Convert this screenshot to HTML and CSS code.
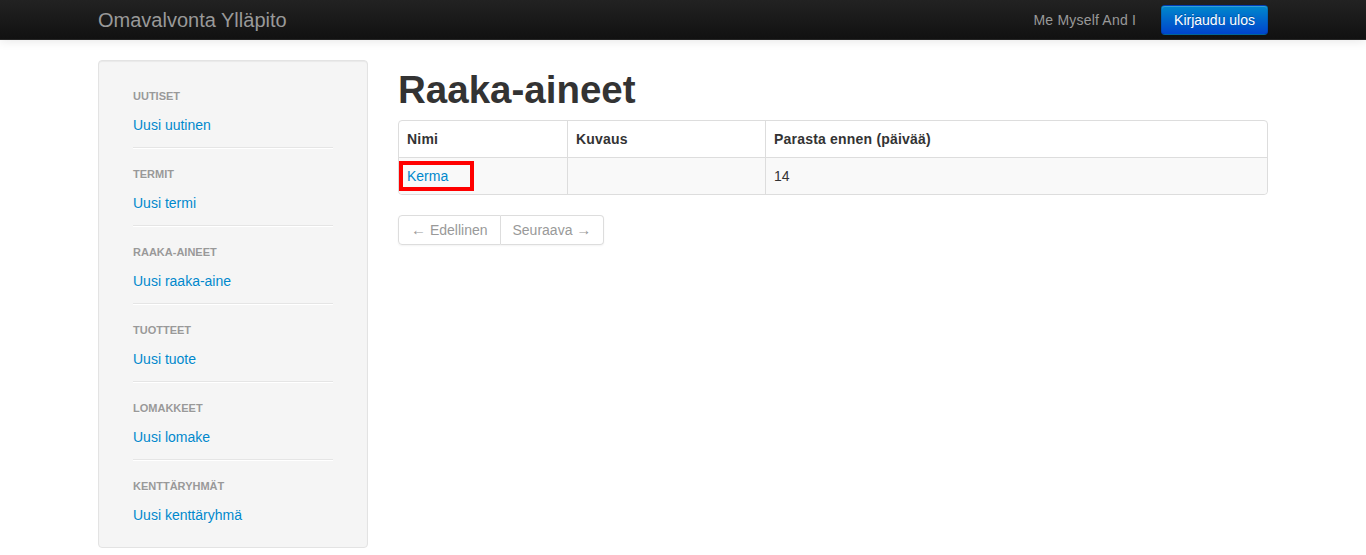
FILE: index.html
```html
<!DOCTYPE html>
<html lang="fi">
<head>
<meta charset="utf-8">
<title>Raaka-aineet</title>
<link rel="stylesheet" href="styles.css">
</head>
<body>
<header class="navbar">
  <div class="container navbar-inner">
    <a class="brand" href="#">Omavalvonta Ylläpito</a>
    <div class="navbar-right">
      <span class="navbar-text">Me Myself And I</span>
      <a class="btn btn-primary" href="#">Kirjaudu ulos</a>
    </div>
  </div>
</header>
<main class="container layout">
  <aside class="well">
    <ul class="nav-list">
      <li class="nav-header">Uutiset</li>
      <li><a href="#">Uusi uutinen</a></li>
      <li class="divider"></li>
      <li class="nav-header">Termit</li>
      <li><a href="#">Uusi termi</a></li>
      <li class="divider"></li>
      <li class="nav-header">Raaka-aineet</li>
      <li><a href="#">Uusi raaka-aine</a></li>
      <li class="divider"></li>
      <li class="nav-header">Tuotteet</li>
      <li><a href="#">Uusi tuote</a></li>
      <li class="divider"></li>
      <li class="nav-header">Lomakkeet</li>
      <li><a href="#">Uusi lomake</a></li>
      <li class="divider"></li>
      <li class="nav-header">Kenttäryhmät</li>
      <li><a href="#">Uusi kenttäryhmä</a></li>
    </ul>
  </aside>
  <section class="content">
    <h1 class="title">Raaka-aineet</h1>
    <table class="table">
      <thead>
        <tr>
          <th class="col-name">Nimi</th>
          <th class="col-desc">Kuvaus</th>
          <th class="col-best">Parasta ennen (päivää)</th>
        </tr>
      </thead>
      <tbody>
        <tr>
          <td class="cell-name"><a href="#">Kerma</a><span class="highlight"></span></td>
          <td></td>
          <td>14</td>
        </tr>
      </tbody>
    </table>
    <div class="pagination">
      <ul>
        <li class="disabled"><a href="#"><span class="arrow">←</span> Edellinen</a></li>
        <li class="disabled"><a href="#">Seuraava <span class="arrow">→</span></a></li>
      </ul>
    </div>
  </section>
</main>
</body>
</html>
```
FILE: styles.css
```css
* { box-sizing: border-box; }
html, body { margin: 0; padding: 0; }
body {
  font-family: "Liberation Sans", Arial, Helvetica, sans-serif;
  font-size: 14px;
  line-height: 20px;
  color: #333333;
  background: #ffffff;
}
a { color: #0088cc; text-decoration: none; }

.container { width: 1170px; margin: 0 auto; }

/* Navbar */
.navbar {
  height: 40px;
  background: linear-gradient(to bottom, #222222, #111111);
  border-bottom: 1px solid #252525;
  box-shadow: 0 1px 10px rgba(0, 0, 0, 0.1);
  position: relative;
  z-index: 2;
}
.navbar-inner {
  display: flex;
  align-items: flex-start;
  justify-content: space-between;
  height: 39px;
}
.brand {
  display: block;
  padding: 10px 0;
  font-size: 20px;
  line-height: 20px;
  color: #999999;
  font-weight: 200;
}
.navbar-right {
  display: flex;
  align-items: flex-start;
  gap: 25px;
}
.navbar-text {
  line-height: 40px;
  color: #999999;
  letter-spacing: 0.2px;
}
.btn {
  display: inline-block;
  margin-top: 5px;
  padding: 4px 12px;
  font-size: 14px;
  line-height: 20px;
  border-radius: 4px;
  border: 1px solid;
}
.btn-primary {
  color: #ffffff;
  text-shadow: 0 -1px 0 rgba(0, 0, 0, 0.25);
  background: linear-gradient(to bottom, #0088cc, #0044cc);
  border-color: rgba(0,0,0,0.1) rgba(0,0,0,0.1) rgba(0,0,0,0.25);
  box-shadow: inset 0 1px 0 rgba(255,255,255,0.2), 0 1px 2px rgba(0,0,0,0.05);
}

/* Layout */
.layout {
  display: grid;
  grid-template-columns: 270px 870px;
  column-gap: 30px;
  align-items: start;
  padding-top: 20px;
}

/* Sidebar well */
.well {
  background: #f5f5f5;
  border: 1px solid #e3e3e3;
  border-radius: 4px;
  box-shadow: inset 0 1px 1px rgba(0, 0, 0, 0.05);
  padding: 19px 19px 20px;
}
.nav-list {
  list-style: none;
  margin: 0;
  padding: 0 15px;
}
.nav-header {
  display: block;
  padding: 6px 0 3px;
  font-size: 11px;
  font-weight: bold;
  line-height: 20px;
  color: #999999;
  text-transform: uppercase;
  text-shadow: 0 1px 0 rgba(255, 255, 255, 0.5);
}
.nav-list li a {
  display: block;
  padding: 6px 0 2px;
  line-height: 20px;
  text-shadow: 0 1px 0 rgba(255, 255, 255, 0.5);
}
.divider {
  height: 2px;
  margin: 10px 0 9px;
  background: #e5e5e5;
  border-bottom: 1px solid #ffffff;
}

/* Content */
.title {
  margin: 10px 0;
  font-size: 38.5px;
  line-height: 40px;
  font-weight: bold;
  color: #333333;
}
.table {
  width: 100%;
  table-layout: fixed;
  border-collapse: separate;
  border-spacing: 0;
  border: 1px solid #dddddd;
  border-radius: 4px;
  margin-bottom: 20px;
}
.table th, .table td {
  padding: 8px;
  line-height: 20px;
  text-align: left;
  vertical-align: top;
  border-left: 1px solid #dddddd;
}
.table th:first-child, .table td:first-child { border-left: 0; }
.table th { font-weight: bold; letter-spacing: 0.2px; }
.table td { border-top: 1px solid #dddddd; background: #f9f9f9; }
.table tbody tr:last-child td:first-child { border-bottom-left-radius: 4px; }
.table tbody tr:last-child td:last-child { border-bottom-right-radius: 4px; }
.col-name { width: 168px; }
.col-desc { width: 198px; }
.cell-name { position: relative; }
.highlight {
  position: absolute;
  left: 0;
  top: 3px;
  width: 75px;
  height: 30px;
  border: 4px solid #ff0000;
  pointer-events: none;
}

/* Pagination */
.pagination { margin: 0; }
.pagination ul {
  display: inline-flex;
  list-style: none;
  margin: 0;
  padding: 0;
  border-radius: 4px;
  box-shadow: 0 1px 2px rgba(0, 0, 0, 0.05);
}
.pagination li a {
  display: block;
  padding: 4px 12px;
  line-height: 20px;
  background: #ffffff;
  border: 1px solid #dddddd;
  border-left-width: 0;
  color: #999999;
}
.pagination .arrow {
  font-size: 15px;
  line-height: 20px;
}
.pagination li:first-child a {
  border-left-width: 1px;
  border-radius: 4px 0 0 4px;
}
.pagination li:last-child a { border-radius: 0 4px 4px 0; }
```
